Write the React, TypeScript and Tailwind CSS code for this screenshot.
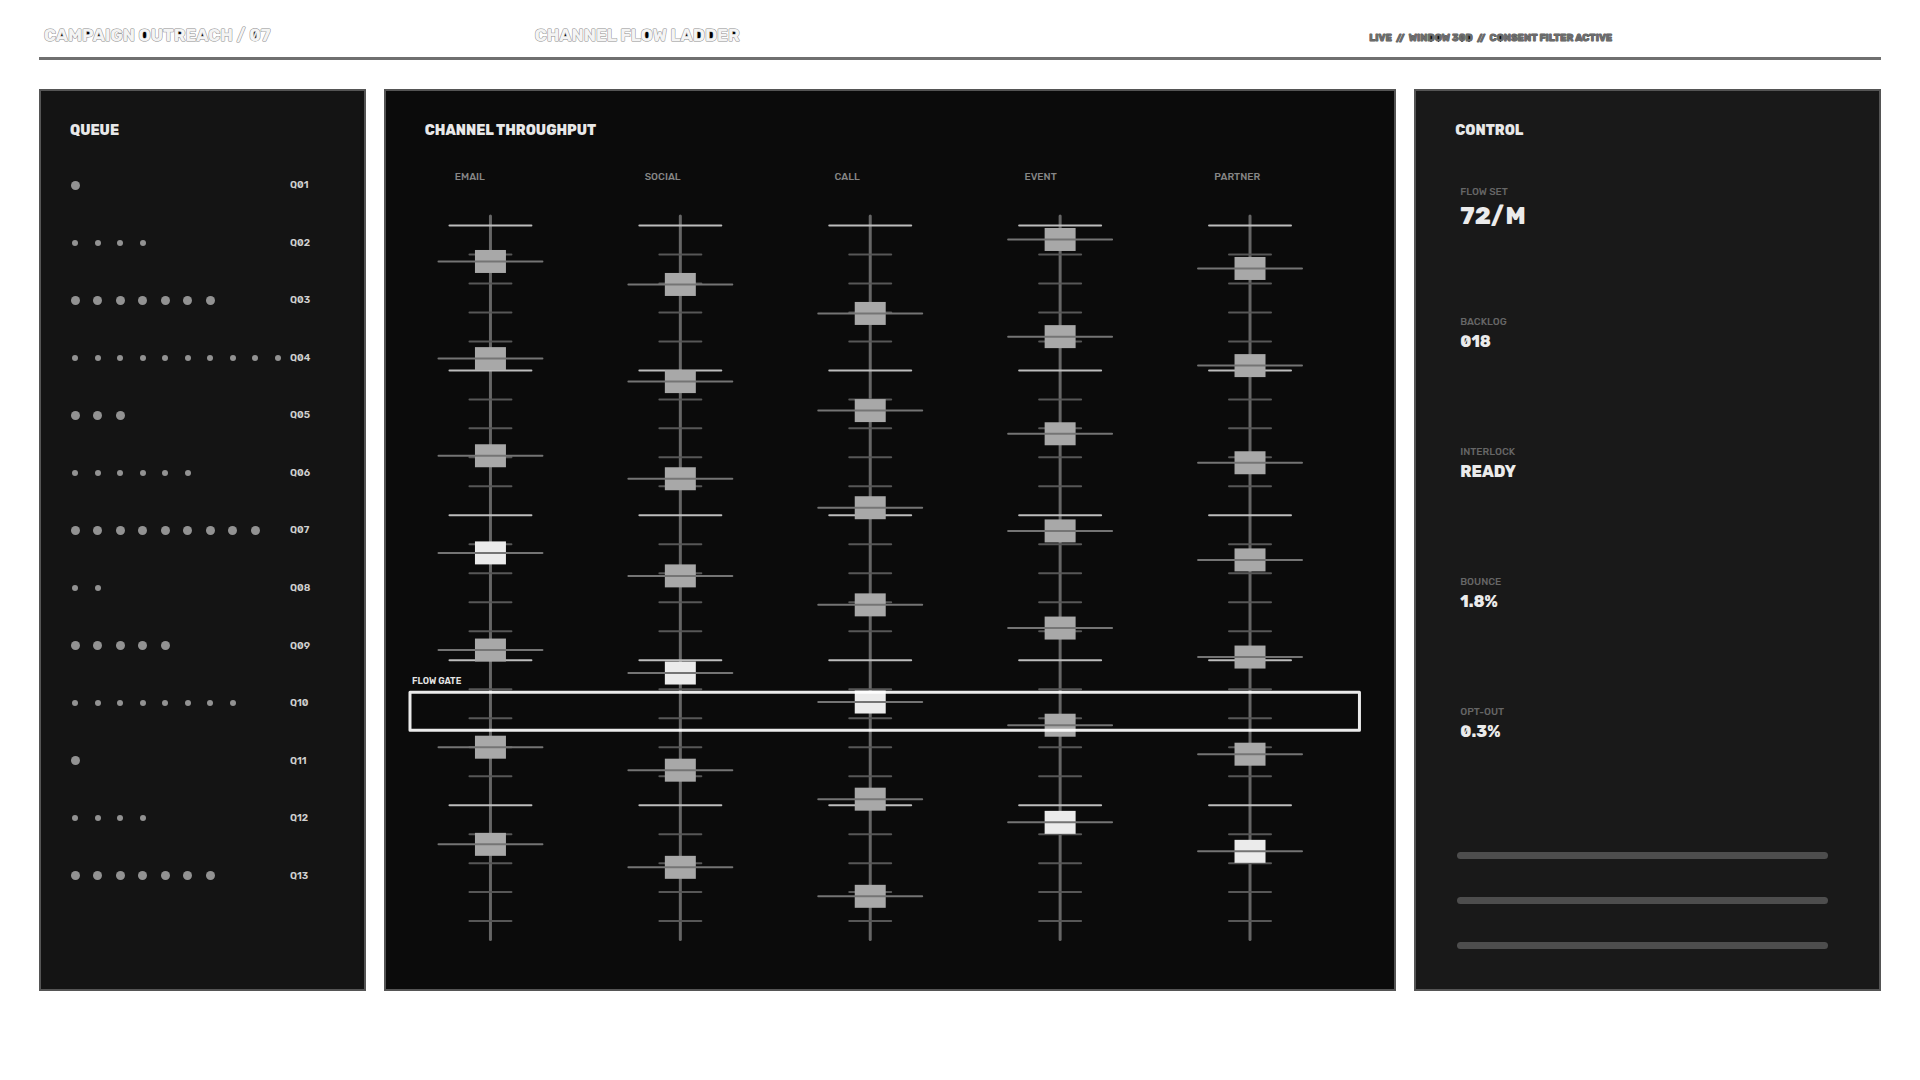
import { clsx } from 'clsx';

const QUEUE = [1, 4, 7, 10, 3, 6, 9, 2, 5, 8, 1, 4, 7];

const CHANNELS = [
  { name: 'EMAIL', first: 55.5, active: 3 },
  { name: 'SOCIAL', first: 78.5, active: 4 },
  { name: 'CALL', first: 107.5, active: 4 },
  { name: 'EVENT', first: 33.5, active: 6 },
  { name: 'PARTNER', first: 62.5, active: 6 },
];

const METRICS = [
  { label: 'FLOW SET', value: '72/M', large: true },
  { label: 'BACKLOG', value: '018' },
  { label: 'INTERLOCK', value: 'READY' },
  { label: 'BOUNCE', value: '1.8%' },
  { label: 'OPT-OUT', value: '0.3%' },
];

const TICKS = Array.from({ length: 25 }, (_, i) => i);
const BLOCKS = Array.from({ length: 7 }, (_, i) => i);

// Letters with a closed counter get a dark spot behind them
const COUNTERS: Record<string, string> = {
  O: 'bg-[radial-gradient(ellipse_3px_5px_at_50%_50%,#000_85%,transparent)]',
  D: 'bg-[radial-gradient(ellipse_3px_5px_at_48%_50%,#000_85%,transparent)]',
  '0': 'bg-[radial-gradient(ellipse_3px_4px_at_50%_50%,#000_80%,transparent)]',
  A: 'bg-[radial-gradient(ellipse_3px_3px_at_50%_52%,#000_80%,transparent)]',
  P: 'bg-[radial-gradient(ellipse_4px_3px_at_50%_40%,#000_80%,transparent)]',
  R: 'bg-[radial-gradient(ellipse_4px_3px_at_50%_40%,#000_80%,transparent)]',
};

// Same idea at the small status size, where only the round letters fill in
const SMALL_COUNTERS: Record<string, string> = {
  O: 'bg-[radial-gradient(ellipse_2px_4px_at_50%_50%,#000_85%,transparent)]',
  D: 'bg-[radial-gradient(ellipse_2px_4px_at_50%_50%,#000_85%,transparent)]',
  '0': 'bg-[radial-gradient(ellipse_2px_4px_at_50%_50%,#000_85%,transparent)]',
};

function OutlineText({ text, counters = COUNTERS }: { text: string; counters?: Record<string, string> }) {
  return (
    <>
      {text.split('').map((ch, i) => (
        counters[ch] ? <span key={i} className={counters[ch]}>{ch}</span> : ch
      ))}
    </>
  );
}

function Header() {
  return (
    <header className="grid grid-cols-[491fr_835fr_512fr] items-center h-[60px] pt-[15px] pl-[5px] border-b-[3px] border-[#707070]">
      <h1 className="text-[17px] font-bold text-[#f4f4f4] [-webkit-text-stroke:1px_#8c8c8c] [paint-order:stroke] whitespace-nowrap">
        <OutlineText text="CAMPAIGN OUTREACH / 07" />
      </h1>
      <p className="text-[17px] font-bold text-[#f4f4f4] [-webkit-text-stroke:1px_#8c8c8c] [paint-order:stroke] whitespace-nowrap">
        <OutlineText text="CHANNEL FLOW LADDER" />
      </p>
      <p className="pt-1 text-[10px] font-bold text-[#6c6c6c] [-webkit-text-stroke:1px_#5a5a5a] [paint-order:stroke] whitespace-pre">
        <OutlineText text="LIVE  //  WINDOW 30D  //  CONSENT FILTER ACTIVE" counters={SMALL_COUNTERS} />
      </p>
    </header>
  );
}

function QueuePanel() {
  return (
    <section className="flex flex-col border-2 border-[#555] bg-[#141414] pt-[30px] pb-[105px]">
      <h2 className="pl-[29px] text-sm leading-5 font-extrabold text-[#e8e8e8]">QUEUE</h2>
      <ul className="mt-9 pl-[23px] flex-1 flex flex-col justify-between">
        {QUEUE.map((count, row) => (
          <li key={row} className="flex items-center h-4">
            <div className="grid grid-cols-10 w-[225px] shrink-0 place-items-center">
              {Array.from({ length: count }, (_, i) => (
                <span
                  key={i}
                  className={clsx('rounded-full bg-[#929292]', row % 2 === 0 ? 'size-[9px]' : 'size-[6px]')}
                />
              ))}
            </div>
            <span className="pl-px text-[10px] leading-4 font-semibold text-[#cfcfcf]">
              Q{String(row + 1).padStart(2, '0')}
            </span>
          </li>
        ))}
      </ul>
    </section>
  );
}

function Ladder() {
  return (
    <svg viewBox="0 0 1009 744" className="block w-full mt-[21px]" role="img" aria-label="Channel throughput ladder">
      {CHANNELS.map((channel, col) => {
        const x = 104.5 + col * 190;
        return (
          <g key={channel.name} strokeLinecap="round">
            <line x1={x} x2={x} y1={10} y2={734} stroke="#666" strokeWidth={3} />
            {TICKS.map(i => {
              const major = i % 5 === 0;
              const half = major ? 41 : 21;
              const y = 19.5 + i * 29;
              return (
                <line
                  key={i}
                  x1={x - half}
                  x2={x + half}
                  y1={y}
                  y2={y}
                  stroke={major ? '#bdbdbd' : '#575757'}
                  strokeWidth={2}
                />
              );
            })}
            {BLOCKS.map(i => {
              const y = channel.first + i * 97.2;
              return (
                <g key={i}>
                  <rect x={x - 15.5} y={y - 11.5} width={31} height={23} fill={i === channel.active ? '#ebebeb' : '#a8a8a8'} />
                  <line x1={x - 52} x2={x + 52} y1={y} y2={y} stroke="#747474" strokeWidth={2} />
                </g>
              );
            })}
          </g>
        );
      })}
      <rect x={24} y={486.5} width={950} height={38} fill="none" stroke="#fff" strokeOpacity={0.92} strokeWidth={3} strokeLinejoin="round" />
      <text x={26} y={478} className="fill-[#e4e4e4] text-[9px] font-semibold">FLOW GATE</text>
    </svg>
  );
}

function ThroughputPanel() {
  return (
    <section className="border-2 border-[#555] bg-[#0b0b0b] pt-[30px]">
      <h2 className="pl-[39px] text-sm leading-5 font-extrabold text-[#e8e8e8]">CHANNEL THROUGHPUT</h2>
      <div className="grid grid-cols-5 mt-7 pl-[9px] pr-[50px] text-[10px] leading-4 font-medium text-[#868686]">
        {CHANNELS.map(channel => (
          <span key={channel.name} className="pl-[60px]">{channel.name}</span>
        ))}
      </div>
      <Ladder />
    </section>
  );
}

function ControlPanel() {
  return (
    <section className="flex flex-col border-2 border-[#555] bg-[#191919] pt-[30px]">
      <h2 className="pl-[39px] text-sm leading-5 font-extrabold text-[#e8e8e8]">CONTROL</h2>
      <dl className="mt-[43px] pl-11">
        {METRICS.map(metric => (
          <div key={metric.label} className="h-[130px]">
            <dt className="text-[10px] leading-4 font-medium text-[#666]">{metric.label}</dt>
            <dd
              className={clsx(
                'font-extrabold text-[#ebebeb]',
                metric.large ? 'text-2xl leading-8' : 'text-base leading-6'
              )}
            >
              {metric.value}
            </dd>
          </div>
        ))}
      </dl>
      <div className="mt-auto mb-10 ml-[41px] mr-[51px] flex flex-col gap-[38px]">
        <div className="h-[7px] rounded-full bg-[#4d4d4d]" />
        <div className="h-[7px] rounded-full bg-[#4d4d4d]" />
        <div className="h-[7px] rounded-full bg-[#4d4d4d]" />
      </div>
    </section>
  );
}

export default function App() {
  return (
    <div className="min-h-screen flex flex-col bg-white px-[39px] pb-[89px] font-['Rubik','Inter',sans-serif] slashed-zero">
      <Header />
      <main className="flex-1 mt-[29px] grid grid-cols-[327fr_1013fr_467fr] gap-[18px]">
        <QueuePanel />
        <ThroughputPanel />
        <ControlPanel />
      </main>
    </div>
  );
}
